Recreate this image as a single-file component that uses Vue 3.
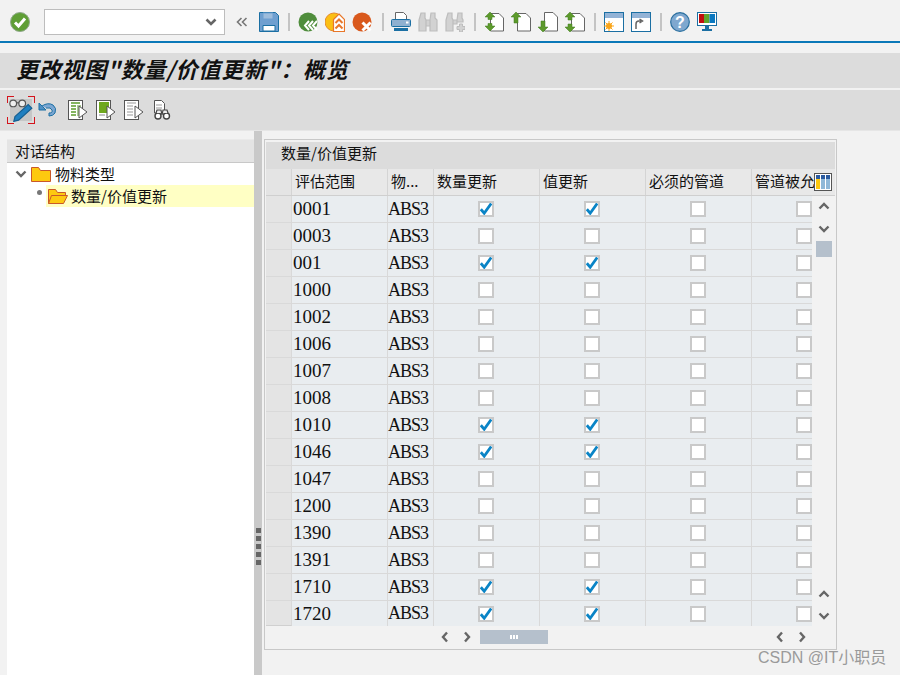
<script setup>
const rows = [
  ['0001', 1, 1], ['0003', 0, 0], ['001', 1, 1], ['1000', 0, 0],
  ['1002', 0, 0], ['1006', 0, 0], ['1007', 0, 0], ['1008', 0, 0],
  ['1010', 1, 1], ['1046', 1, 1], ['1047', 0, 0], ['1200', 0, 0],
  ['1390', 0, 0], ['1391', 0, 0], ['1710', 1, 1], ['1720', 1, 1]
]
</script>

<template>
  <div class="page">
    <div class="sysbar">
      <svg class="ic" viewBox="0 0 20 20"><circle cx="10" cy="10" r="9.5" fill="#5f9e35" stroke="#8fa88a"/><path d="M5 10.5l3.5 3.5L15 6.5" fill="none" stroke="#fff" stroke-width="3"/></svg>
      <div class="cmd"><svg class="chev" viewBox="0 0 12 8"><path d="M1.500 1.500L6 6l4.500-4.500" fill="none" stroke="#666" stroke-width="2.600"/></svg></div>
      <svg class="dbl" viewBox="0 0 12 10"><path d="M5.500 1L1.500 5l4 4M10.500 1l-4 4 4 4" fill="none" stroke="#777" stroke-width="1.600"/></svg>
      <svg class="ic" viewBox="0 0 20 20"><path d="M.5.500h16l3 3v16H.5z" fill="#6f9fd0" stroke="#1b6fa3"/><path d="M4 1h10v6H4z" fill="#9dbcdc" stroke="#6f9fd0"/><path d="M4 13.500h12V19H4z" fill="#fff" stroke="#1b6fa3"/></svg>
      <i class="sep"></i>
      <svg class="ic" viewBox="0 0 20 20"><circle cx="10" cy="10" r="9.5" fill="#4f8d3c"/><path d="M11 9l-4 4.500 4 4.500M15 9l-4 4.500 4 4.500M19 9l-4 4.500 4 4.500" fill="none" stroke="#fff" stroke-width="2"/></svg>
      <svg class="ic" viewBox="0 0 20 20"><circle cx="9" cy="10" r="9" fill="#fbbf14" stroke="#e58a2a"/><path d="M14 2l5.500 5.500V19.500H8.500V7.500z" fill="#fff" stroke="#e8772a" stroke-width="1.200"/><path d="M10.500 11l3.500-3.500 3.500 3.500M10.500 16.500l3.500-3.500 3.500 3.500" fill="none" stroke="#e8772a" stroke-width="2"/></svg>
      <svg class="ic" viewBox="0 0 20 20"><circle cx="10" cy="10" r="9.500" fill="#d9591d"/><path d="M10.500 10.500l8 8M18.500 10.500l-8 8" stroke="#fff" stroke-width="3"/></svg>
      <i class="sep s3"></i>
      <svg class="ic" viewBox="0 0 20 20"><path d="M4.500.500h8l3 3V8h-11z" fill="#fff" stroke="#666"/><rect x=".5" y="7.500" width="19" height="7" rx="1" fill="#8fb0d0" stroke="#1b6fa3"/><rect x="15" y="9.500" width="2.500" height="2" fill="#fff"/><rect x="3" y="16" width="14" height="3" fill="#1b6fa3"/></svg>
      <svg class="ic" viewBox="0 0 20 20"><path d="M3 1h4v5l1 2v11H1V8zM13 1h4v5l2 2v11h-7V8zM8 8h4v6H8z" fill="#d2d2d2" stroke="#bdbdbd" stroke-width="1.200"/></svg>
      <svg class="ic" viewBox="0 0 20 20"><path d="M3 1h4v5l1 2v11H1V8zM13 1h4v5l1 2v2h-6V8zM8 8h4v4H8z" fill="#d2d2d2" stroke="#bdbdbd" stroke-width="1.200"/><path d="M12 14.500h2.500V12h3v2.500H20v3h-2.500V20h-3v-2.500H12z" fill="#d2d2d2" stroke="#bdbdbd"/></svg>
      <i class="sep"></i>
      <svg class="ic" viewBox="0 0 20 20"><path d="M6.500 1.500H15l4.500 4.500v13H6.500z" fill="#fff" stroke="#666"/><path d="M6 0l5 5H8v2.500H4V5H1zM6 19l5-5H8v-2.500H4V14H1z" fill="#5d9a2c" stroke="#3f7a1e" stroke-width=".5"/></svg>
      <svg class="ic" viewBox="0 0 20 20"><path d="M6.500 1.500H15l4.500 4.500v13H6.500z" fill="#fff" stroke="#666"/><path d="M5 0l5 5H7v6H3V5H0z" fill="#5d9a2c" stroke="#3f7a1e" stroke-width=".5"/></svg>
      <svg class="ic" viewBox="0 0 20 20"><path d="M6.500 .5H15l4.500 4.500v14H6.500z" fill="#fff" stroke="#666"/><path d="M5 20l5-5H7V9H3v6H0z" fill="#5d9a2c" stroke="#3f7a1e" stroke-width=".5"/></svg>
      <svg class="ic" viewBox="0 0 20 20"><path d="M6.500 1.500H15l4.500 4.500v13H6.500z" fill="#fff" stroke="#666"/><path d="M5 0l5 5H7v3H3V5H0zM5 20l5-5H7v-3H3v3H0z" fill="#5d9a2c" stroke="#3f7a1e" stroke-width=".5"/></svg>
      <i class="sep"></i>
      <svg class="ic" viewBox="0 0 20 20"><rect x=".5" y=".5" width="19" height="19" fill="#fff" stroke="#1b6fa3"/><rect x="1" y="1" width="18" height="5" fill="#93b3d6"/><circle cx="5" cy="14" r="3" fill="#f9a51a"/><path d="M5 9v10M0 14h10M1.500 10.500l7 7M8.500 10.500l-7 7" stroke="#f9a51a"/></svg>
      <svg class="ic" viewBox="0 0 20 20"><rect x=".5" y=".5" width="19" height="19" fill="#fff" stroke="#1b6fa3"/><rect x="1" y="1" width="18" height="5" fill="#93b3d6"/><path d="M5 17v-5q0-3 3-3h2M8.500 7l3 2-3 2" fill="none" stroke="#666" stroke-width="1.500"/></svg>
      <i class="sep"></i>
      <svg class="ic" viewBox="0 0 20 20"><circle cx="10" cy="10" r="9.300" fill="#7fa8cf" stroke="#2a6f9f" stroke-width="1.200"/><text x="10" y="15.500" text-anchor="middle" class="q">?</text></svg>
      <svg class="ic" viewBox="0 0 20 20"><rect x=".5" y=".5" width="19" height="13" fill="#fff" stroke="#1b6fa3"/><rect x="2" y="2" width="5" height="9" fill="#c00d0d"/><rect x="7" y="2" width="5.500" height="9" fill="#5fa32a"/><rect x="12.500" y="2" width="5.500" height="9" fill="#0a78c0"/><path d="M8 14h4v3h3v2H5v-2h3z" fill="#1b6fa3"/></svg>
    </div>
    <div class="blue"></div>
    <div class="title">更改视图"数量/价值更新"：概览</div>
    <div class="apptool">
      <div class="focus">
        <svg class="ic big" viewBox="0 0 20 20"><circle cx="3.500" cy="4.500" r="2.800" fill="#eee" stroke="#555"/><circle cx="11" cy="4.500" r="2.800" fill="#eee" stroke="#555"/><path d="M6 4h2.500" stroke="#555"/><path d="M4 19.500l1-4 11-10 3 3-11 10z" fill="#1f7fc0" stroke="#155f92"/></svg>
      </div>
      <svg class="ic" viewBox="0 0 20 20"><path d="M1 3v7h7z" fill="#4f8fc4" stroke="#1b6fa3"/><path d="M4 6q6-4 11-1 4 3 2 8-2 3-6 3v-3q4 0 3-3-1-3-6-2" fill="#7ba6d2" stroke="#1b6fa3"/></svg>
      <svg class="ic s2" viewBox="0 0 20 20"><rect x=".5" y=".5" width="14" height="19" fill="#fff" stroke="#555"/><path d="M3 3h9M3 6h5M3 9h5M3 12h5M3 15h5" stroke="#5c9c2c" stroke-width="1.500"/><rect x="9" y="5" width="4" height="11" fill="#a9cc90"/><path d="M11 6l8 6-8 6z" fill="#fff" stroke="#555"/></svg>
      <svg class="ic" viewBox="0 0 20 20"><rect x=".5" y=".5" width="14" height="19" fill="#fff" stroke="#555"/><rect x="3" y="2" width="10" height="11" fill="#6fa81f"/><path d="M3 15h6" stroke="#888"/><path d="M11 6l8 6-8 6z" fill="#fff" stroke="#555"/></svg>
      <svg class="ic" viewBox="0 0 20 20"><rect x=".5" y=".5" width="14" height="19" fill="#fff" stroke="#555"/><path d="M3 3h9M3 6h6M3 9h6M3 12h6M3 15h6" stroke="#999" stroke-width="1.200"/><path d="M11 6l8 6-8 6z" fill="#fff" stroke="#555"/></svg>
      <svg class="ic s1" viewBox="0 0 20 20"><path d="M1.500.500h7l3 3V13h-10z" fill="#fff" stroke="#555"/><path d="M3 5h6M3 8h6" stroke="#999"/><circle cx="5" cy="16" r="3" fill="#fff" stroke="#444" stroke-width="1.400"/><circle cx="13.500" cy="16" r="3" fill="#fff" stroke="#444" stroke-width="1.400"/><path d="M3 13l1-3h4l1 5 1-5h4l1 3" fill="#eee" stroke="#444" stroke-width="1.200"/></svg>
    </div>
    <div class="main">
      <div class="left">
        <div class="lhead">对话结构</div>
        <div class="tree">
          <div class="node n1">
            <svg class="tw" viewBox="0 0 12 8"><path d="M1.500 1.500L6 6l4.500-4.500" fill="none" stroke="#666" stroke-width="2.400"/></svg>
            <svg class="folder" viewBox="0 0 20 15"><path d="M.5 14.500V.5h7l2 3h10v11z" fill="#fdc90f" stroke="#c9582a"/></svg>
            <span>物料类型</span>
          </div>
          <div class="node n2">
            <span class="bullet"></span>
            <div class="sel">
              <svg class="folder" viewBox="0 0 20 15"><path d="M.5 14.500V.5h7l2 3h8v3" fill="#fdc90f" stroke="#c9582a"/><path d="M.5 14.500l3-8h16l-4 8z" fill="#fdc90f" stroke="#c9582a"/></svg>
              <span>数量/价值更新</span>
            </div>
          </div>
        </div>
      </div>
      <div class="splitter">
        <i></i><i></i><i></i><i></i><i></i>
      </div>
      <div class="right">
        <div class="rtitle">数量/价值更新</div>
        <div class="thead">
          <div class="th corner"></div>
          <div class="th t1">评估范围</div>
          <div class="th t2">物...</div>
          <div class="th">数量更新</div>
          <div class="th">值更新</div>
          <div class="th">必须的管道</div>
          <div class="th last">管道被允</div>
          <svg class="config" viewBox="0 0 18 18"><rect x=".5" y=".5" width="17" height="17" fill="#fff" stroke="#555"/><rect x="2" y="2" width="4" height="14" fill="#fdc90f"/><rect x="7" y="2" width="4" height="14" fill="#8fb8d8"/><rect x="12" y="2" width="4" height="14" fill="#8fb8d8"/><rect x="2" y="2" width="4" height="4" fill="#2a5a9f"/><rect x="7" y="2" width="4" height="4" fill="#2a5a9f"/><rect x="12" y="2" width="4" height="4" fill="#2a5a9f"/></svg>
        </div>
        <div class="body">
          <div class="grid">
            <div v-for="r in rows" :key="r[0]" class="row">
              <div class="rh"></div>
              <div class="td num">{{ r[0] }}</div>
              <div class="td mat">ABS3</div>
              <div class="td ck"><span class="box"><svg v-if="r[1]" viewBox="0 0 12 12"><path d="M.8 6.200l3.400 4L11.200 .5" fill="none" stroke="#0a84c6" stroke-width="2.800"/></svg></span></div>
              <div class="td ck"><span class="box"><svg v-if="r[2]" viewBox="0 0 12 12"><path d="M.8 6.200l3.400 4L11.200 .5" fill="none" stroke="#0a84c6" stroke-width="2.800"/></svg></span></div>
              <div class="td ck"><span class="box"></span></div>
              <div class="td ck end"><span class="box"></span></div>
            </div>
          </div>
          <div class="vscroll">
            <div class="vtop">
              <svg class="sa" viewBox="0 0 12 8"><path d="M1.500 6.500L6 2l4.500 4.500" fill="none" stroke="#666" stroke-width="2.400"/></svg>
              <svg class="sa" viewBox="0 0 12 8"><path d="M1.500 1.500L6 6l4.500-4.500" fill="none" stroke="#666" stroke-width="2.400"/></svg>
              <div class="vthumb"></div>
            </div>
            <div class="vbot">
              <svg class="sa" viewBox="0 0 12 8"><path d="M1.500 6.500L6 2l4.500 4.500" fill="none" stroke="#666" stroke-width="2.400"/></svg>
              <svg class="sa" viewBox="0 0 12 8"><path d="M1.500 1.500L6 6l4.500-4.500" fill="none" stroke="#666" stroke-width="2.400"/></svg>
            </div>
          </div>
        </div>
        <div class="hscroll">
          <svg class="ha" viewBox="0 0 8 12"><path d="M6 1.500L2 6l4 4.500" fill="none" stroke="#666" stroke-width="2.400"/></svg>
          <svg class="ha b" viewBox="0 0 8 12"><path d="M2 1.500L6 6l-4 4.500" fill="none" stroke="#666" stroke-width="2.400"/></svg>
          <div class="hthumb"><i></i><i></i><i></i></div>
          <svg class="ha c" viewBox="0 0 8 12"><path d="M6 1.500L2 6l4 4.500" fill="none" stroke="#666" stroke-width="2.400"/></svg>
          <svg class="ha b" viewBox="0 0 8 12"><path d="M2 1.500L6 6l-4 4.500" fill="none" stroke="#666" stroke-width="2.400"/></svg>
        </div>
      </div>
    </div>
    <div class="mark">CSDN @IT小职员</div>
  </div>
</template>

<style>
html, body { margin: 0; padding: 0; background: #f2f2f2; }
</style>

<style scoped>
.page {
  position: relative;
  width: 900px;
  height: 675px;
  overflow: hidden;
  background: #f2f2f2;
  font-family: "Noto Sans CJK SC", "Liberation Sans", sans-serif;
  color: #111;
}
.ic { width: 20px; height: 20px; flex: none; display: block; }
.ic.big { width: 24px; height: 24px; }
.ic.s2 { margin-left: 2px; }
.ic.s1 { margin-left: 1px; }
.sysbar { height: 41px; display: flex; align-items: center; gap: 7px; padding: 3px 0 0 10px; box-sizing: border-box; }
.cmd {
  margin-left: 7px; width: 181px; height: 26px; box-sizing: border-box;
  background: #fff; border: 1px solid #bdbdbd; display: flex; align-items: center; justify-content: flex-end; padding-right: 7px;
}
.chev { width: 12px; height: 8px; }
.dbl { width: 12px; height: 10px; margin: 0 4px; }
.sep { display: block; width: 2px; height: 18px; background: #c4c4c4; margin: 0 1px 0 2px; flex: none; }
.sep.s3 { margin: 0 0 0 3px; }
.q { font: bold 16px "Liberation Sans", sans-serif; fill: #fff; }
.blue { height: 2px; background: #0a78b8; margin-bottom: 10px; }
.title {
  height: 35px; background: #dcdcdc; padding-left: 16px; box-sizing: border-box;
  font-size: 22px; line-height: 30px; font-style: italic; font-weight: 700; letter-spacing: .8px; white-space: nowrap;
}
.apptool {
  height: 40px; margin-top: 2px; background: #dcdcdc; display: flex; align-items: center; gap: 8px; padding-left: 7px; box-sizing: border-box;
}
.focus {
  width: 28px; height: 28px; box-sizing: border-box; display: flex; align-items: center; justify-content: center; margin-right: -5px;
  background:
    linear-gradient(#d4141c,#d4141c) 0 0/7px 1px no-repeat, linear-gradient(#d4141c,#d4141c) 0 0/1px 7px no-repeat,
    linear-gradient(#d4141c,#d4141c) 100% 0/7px 1px no-repeat, linear-gradient(#d4141c,#d4141c) 100% 0/1px 7px no-repeat,
    linear-gradient(#d4141c,#d4141c) 0 100%/7px 1px no-repeat, linear-gradient(#d4141c,#d4141c) 0 100%/1px 7px no-repeat,
    linear-gradient(#d4141c,#d4141c) 100% 100%/7px 1px no-repeat, linear-gradient(#d4141c,#d4141c) 100% 100%/1px 7px no-repeat,
    linear-gradient(#c6c6c6,#c6c6c6) center/22px 22px no-repeat;
}
.main { height: 545px; display: flex; border-top: 1px solid #e6e6e6; box-sizing: border-box; }
.left { width: 247px; margin-left: 7px; padding-top: 8px; display: flex; flex-direction: column; }
.lhead {
  height: 22px; background: #e4e4e4; border-bottom: 1px solid #c8c8c8; border-top: 1px solid #eaeaea; box-sizing: content-box;
  font-size: 15px; line-height: 21px; padding-left: 8px;
}
.tree { flex: 1; background: #fff; font-size: 15px; }
.node { display: flex; align-items: center; }
.n1 { height: 22px; padding-left: 8px; gap: 4px; }
.tw { width: 12px; height: 8px; }
.folder { width: 20px; height: 15px; flex: none; }
.node span { position: relative; top: -1px; }
.n2 { height: 22px; }
.bullet { width: 5px; height: 5px; border-radius: 50%; background: #777; margin: -6px 0 0 30px; }
.sel { flex: 1; margin-left: 4px; height: 22px; background: #ffffc4; display: flex; align-items: center; padding-left: 2px; gap: 3px; }
.splitter {
  width: 8px; background: #c9c9c9; flex: none; display: flex; flex-direction: column; align-items: center; justify-content: flex-start;
  gap: 3px; padding-top: 397px; box-sizing: border-box;
}
.splitter i { display: block; width: 5px; height: 5px; background: #666; }
.right {
  width: 573px; height: 511px; margin: 8px 0 0 2px; border: 1px solid #c8c8c8; box-sizing: border-box;
  display: flex; flex-direction: column; padding: 2px 1px 0 1px; flex: none;
}
.rtitle { height: 27px; background: #dcdcdc; font-size: 15px; line-height: 22px; padding-left: 15px; flex: none; }
.thead {
  position: relative; display: grid; grid-template-columns: 26px 96px 46px 106px 106px 106px 83px; height: 27px; flex: none;
  background: #e8e8e8; font-size: 15px; line-height: 24px; box-sizing: border-box; border-bottom: 1px solid #cfcfcf;
}
.th { padding-left: 3px; border-right: 1px solid #d4d4d4; white-space: nowrap; overflow: hidden; }
.th.corner { background: #e4e4e4; }
.th.last { border-right: 0; }
.config { position: absolute; top: 4px; right: 3px; width: 18px; height: 18px; }
.body { display: flex; height: 430px; flex: none; }
.grid { width: 546px; flex: none; overflow: hidden; }
.row {
  display: grid; grid-template-columns: 26px 96px 46px 106px 106px 106px 60px; height: 27px; box-sizing: border-box;
  background: #e9edf0; border-bottom: 1px solid #d9d9d9;
}
.row:last-child { height: 25px; border-bottom: 0; }
.row:last-child .rh { border-bottom: 1px solid #d0d0d0; }
.rh { background: #e4e4e4; border-right: 1px solid #d9d9d9; }
.td { border-right: 1px solid #d9d9d9; display: flex; align-items: center; overflow: hidden; }
.td.end { border-right: 0; padding-left: 44px; padding-right: 0; justify-content: flex-start; }
.num, .mat { font-family: "Liberation Serif", serif; color: #111; white-space: nowrap; }
.num { padding-left: 1px; font-size: 19px; }
.mat { font-size: 18px; letter-spacing: -1px; }
.ck { justify-content: center; padding-right: 1px; }
.box {
  display: block; width: 16px; height: 16px; box-sizing: border-box; flex: none;
  background: #fff; border: 2px solid #c9c9c9;
}
.box svg { display: block; width: 12px; height: 12px; }
.vscroll { flex: 1; display: flex; flex-direction: column; justify-content: space-between; align-items: center; padding: 6px 0 6px; box-sizing: border-box; }
.vtop, .vbot { display: flex; flex-direction: column; align-items: center; }
.sa { width: 12px; height: 8px; display: block; }
.vtop .sa + .sa { margin-top: 15px; }
.vbot .sa + .sa { margin-top: 14px; }
.vthumb { width: 16px; height: 16px; background: #b5c0cc; margin-top: 8px; }
.hscroll { flex: 1; display: flex; align-items: center; padding-left: 175px; padding-bottom: 1px; }
.ha { width: 8px; height: 12px; flex: none; }
.ha.b { margin-left: 14px; }
.ha.c { margin-left: 227px; }
.hthumb {
  width: 68px; height: 14px; margin-left: 9px; margin-right: 1px; background: #b5c0cc; display: flex; align-items: center; justify-content: center; gap: 1px;
}
.hthumb i { display: block; width: 2px; height: 4px; background: #fff; }
.mark {
  position: absolute; left: 758px; top: 644px; font: 16px "Liberation Sans", "Noto Sans CJK SC", sans-serif; color: #9a9a9a; white-space: nowrap;
}
</style>
